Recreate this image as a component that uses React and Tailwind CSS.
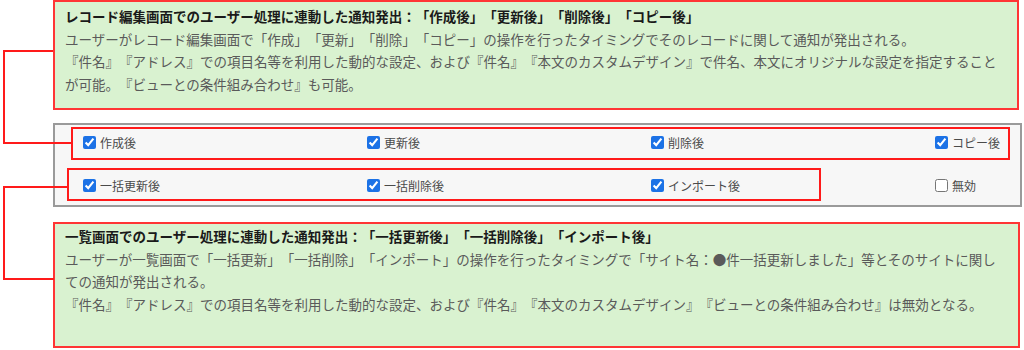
import React from 'react';

const rowOne = [
  { label: '作成後', checked: true },
  { label: '更新後', checked: true },
  { label: '削除後', checked: true },
  { label: 'コピー後', checked: true },
];

const rowTwo = [
  { label: '一括更新後', checked: true },
  { label: '一括削除後', checked: true },
  { label: 'インポート後', checked: true },
  { label: '無効', checked: false },
];

function Check({ label, checked }) {
  return (
    <label className="flex items-center gap-[4px] text-[12px] text-[#4a4a4a]">
      <input
        type="checkbox"
        defaultChecked={checked}
        className="w-[13px] h-[13px] accent-[#1c72e6]"
      />
      <span>{label}</span>
    </label>
  );
}

function NoteBox({ title, children, className }) {
  return (
    <div
      className={`border-2 border-[#ff3535] bg-[#d9f2d0] pl-[10px] pr-[19px] text-[13.5px] leading-[22.7px] [text-spacing-trim:space-all] ${className}`}
    >
      <div className="font-bold text-[#1a1a1a]">{title}</div>
      <div className="text-[#5a5a5a]">{children}</div>
    </div>
  );
}

export default function App() {
  return (
    <div className="relative w-[1024px] h-[350px] overflow-hidden bg-white font-['Noto_Sans_CJK_JP','Noto_Sans',sans-serif]">
      <div className="flex flex-col pl-[53px]">
        <NoteBox
          className="w-[966px] h-[110px] pt-[3px]"
          title="レコード編集画面でのユーザー処理に連動した通知発出：「作成後」「更新後」「削除後」「コピー後」"
        >
          <p>ユーザーがレコード編集画面で「作成」「更新」「削除」「コピー」の操作を行ったタイミングでそのレコードに関して通知が発出される。</p>
          <p>『件名』『アドレス』での項目名等を利用した動的な設定、および『件名』『本文のカスタムデザイン』で件名、本文にオリジナルな設定を指定することが可能。『ビューとの条件組み合わせ』も可能。</p>
        </NoteBox>

        {/* checkbox panel */}
        <div className="mt-[13px] w-[969px] border-2 border-[#9a9a9a] bg-[#f7f7f7] pt-[2px] pb-[4px] pl-[28px] flex flex-col gap-[12px]">
          <div className="h-[31px] grid grid-cols-[284px_284px_284px_100px] items-center">
            {rowOne.map((c) => (
              <Check key={c.label} {...c} />
            ))}
          </div>
          <div className="h-[31px] grid grid-cols-[284px_284px_284px_100px] items-center">
            {rowTwo.map((c) => (
              <Check key={c.label} {...c} />
            ))}
          </div>
        </div>

        <NoteBox
          className="mt-[15px] w-[967px] h-[126px] pt-[1px]"
          title="一覧画面でのユーザー処理に連動した通知発出：「一括更新後」「一括削除後」「インポート後」"
        >
          <p>
            ユーザーが一覧画面で「一括更新」「一括削除」「インポート」の操作を行ったタイミングで「サイト名：●件一括更新しました」等とそのサイトに関し
            <br />
            ての通知が発出される。
          </p>
          <p>『件名』『アドレス』での項目名等を利用した動的な設定、および『件名』『本文のカスタムデザイン』『ビューとの条件組み合わせ』は無効となる。</p>
        </NoteBox>
      </div>

      {/* red annotation overlay */}
      <svg
        className="absolute inset-0 pointer-events-none"
        width="1024"
        height="350"
        viewBox="0 0 1024 350"
        fill="none"
        stroke="#ff1a1a"
        strokeWidth="2"
      >
        <polyline points="53,51 4,51 4,143 72,143" />
        <rect x="72" y="128" width="937" height="31" />
        <rect x="68" y="169" width="752" height="31" />
        <polyline points="68,187 4,187 4,279 54,279" />
      </svg>
    </div>
  );
}
